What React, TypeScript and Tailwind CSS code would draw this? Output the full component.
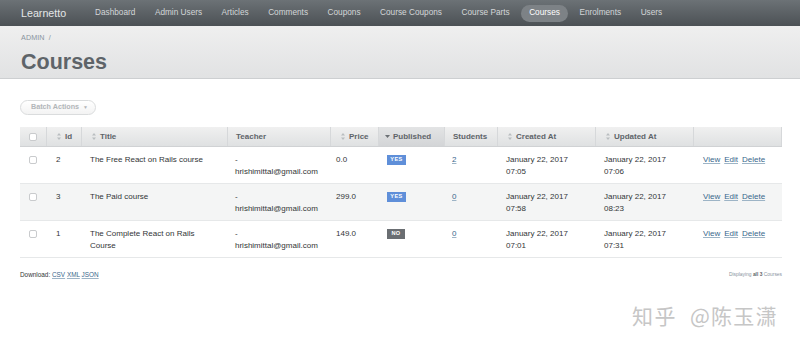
import React from "react"

const navItems = ["Dashboard", "Admin Users", "Articles", "Comments", "Coupons", "Course Coupons", "Course Parts", "Courses", "Enrolments", "Users"]

const gridCols = "grid grid-cols-[27px_35px_146px_103px_48px_66px_53px_98px_98px_88px]"

type Course = {
	id: number
	title: string[]
	price: string
	published: boolean
	students: number
	created: string
	updated: string
}

const courses: Course[] = [
	{ id: 2, title: ["The Free React on Rails course"], price: "0.0", published: true, students: 2, created: "07:05", updated: "07:06" },
	{ id: 3, title: ["The Paid course"], price: "299.0", published: true, students: 0, created: "07:58", updated: "08:23" },
	{ id: 1, title: ["The Complete React on Rails", "Course"], price: "149.0", published: false, students: 0, created: "07:01", updated: "07:31" },
]

const SortIcon = () => (
	<svg width="4" height="7" viewBox="0 0 4 7" className="shrink-0">
		<path d="M2 0 L4 2.6 H0 Z M2 7 L4 4.4 H0 Z" fill="#b9bdc0" />
	</svg>
)

const DownIcon = () => (
	<svg width="5" height="3" viewBox="0 0 5 3" className="shrink-0">
		<path d="M0 0 H5 L2.5 3 Z" fill="#6b7074" />
	</svg>
)

const Checkbox = () => <span className="block w-[8px] h-[8px] rounded-[2px] border border-[#c9cbcd] bg-white" />

const Th = ({ children, sort, pl }: { children?: React.ReactNode; sort?: "both" | "down"; pl: number }) => (
	<div
		className={`flex items-center h-full border-r border-[#d6d8da] ${sort === "down" ? "bg-linear-to-b from-[#e3e4e5] to-[#d3d5d7]" : ""}`}
		style={{ paddingLeft: pl }}
	>
		{sort === "both" && <span className="mr-[4px] flex"><SortIcon /></span>}
		{sort === "down" && <span className="mr-[3px] flex"><DownIcon /></span>}
		{children}
	</div>
)

const Link = ({ children }: { children: React.ReactNode }) => <a className="text-[#38678b] underline underline-offset-[1px] decoration-[#9db4c6]">{children}</a>

export default function App() {
	return (
		<div className="relative w-[800px] h-[348px] overflow-hidden bg-white text-[#323537]" style={{ fontFamily: '"Liberation Sans", Arial, sans-serif' }}>
			{/* header */}
			<header className="flex items-center h-[26px] pt-[1px] bg-linear-to-b from-[#6c7276] to-[#4c5155]">
				<span className="ml-[21px] w-[66px] text-[10.7px] text-[#e4e6e7] leading-none">Learnetto</span>
				<nav className="flex items-center gap-[3.5px]">
					{navItems.map(item => (
						<span
							key={item}
							className={`h-[17px] px-[8px] flex items-center rounded-full text-[8.25px] leading-none ${item === "Courses" ? "bg-[#7d8286] text-white" : "text-[#d3d6d8]"}`}
						>
							{item}
						</span>
					))}
				</nav>
			</header>

			{/* title bar */}
			<div className="h-[53px] px-[21px] pt-[7px] bg-linear-to-b from-[#efefef] to-[#e1e2e3] border-b border-[#cdcfd1]">
				<div className="text-[7.2px] leading-[10px] text-[#8a949e] tracking-[0.1px]">ADMIN &nbsp;/</div>
				<h2 className="mt-[7px] text-[21.5px] leading-[24px] font-bold text-[#5e6469]">Courses</h2>
			</div>

			{/* content */}
			<div className="px-[20px]">
				<div className="mt-[21px] flex items-center w-[76px] h-[15px] rounded-full border border-[#dadcdd] bg-linear-to-b from-white to-[#f3f3f3] pl-[10px] text-[7.2px] font-bold text-[#b2b6b9]">
					Batch Actions
					<span className="ml-[4px] text-[5px]">▼</span>
				</div>

				<div className="mt-[12px] w-[762px] text-[8px]">
					<div className={`${gridCols} h-[20px] bg-linear-to-b from-[#f0f0f0] to-[#dfe1e2] border-b border-[#d0d2d4] font-bold text-[#5e6469]`}>
						<Th pl={9}><Checkbox /></Th>
						<Th pl={10} sort="both">Id</Th>
						<Th pl={10} sort="both">Title</Th>
						<Th pl={8}>Teacher</Th>
						<Th pl={10} sort="both">Price</Th>
						<Th pl={6} sort="down">Published</Th>
						<Th pl={8}>Students</Th>
						<Th pl={10} sort="both">Created At</Th>
						<Th pl={10} sort="both">Updated At</Th>
						<Th pl={8} />
					</div>
					{courses.map((c, i) => (
						<div key={c.id} className={`${gridCols} h-[37px] pt-[7px] leading-[12px] border-b border-[#e6e8e9] ${i % 2 === 1 ? "bg-[#f4f5f5]" : "bg-white"}`}>
							<div className="pl-[9px] pt-[2px]"><Checkbox /></div>
							<div className="pl-[9px]">{c.id}</div>
							<div className="pl-[8px]">
								{c.title.map(t => <div key={t}>{t}</div>)}
							</div>
							<div className="pl-[7px]">
								<div>-</div>
								<div>hrishimittal@gmail.com</div>
							</div>
							<div className="pl-[5px]">{c.price}</div>
							<div className="pl-[8px] pt-[1px]">
								<span
									className={`flex items-center justify-center h-[10px] text-[5.6px] font-bold tracking-[0.4px] text-white leading-none ${c.published ? "w-[19px] bg-[#5f8fd9]" : "w-[18px] bg-[#6a6e72]"}`}
								>
									{c.published ? "YES" : "NO"}
								</span>
							</div>
							<div className="pl-[7px]"><Link>{c.students}</Link></div>
							<div className="pl-[8px]">
								<div>January 22, 2017</div>
								<div>{c.created}</div>
							</div>
							<div className="pl-[8px]">
								<div>January 22, 2017</div>
								<div>{c.updated}</div>
							</div>
							<div className="pl-[9px] flex gap-[4px] h-[12px]">
								<Link>View</Link>
								<Link>Edit</Link>
								<Link>Delete</Link>
							</div>
						</div>
					))}
				</div>

				<div className="mt-[12px] w-[762px] flex items-center justify-between h-[9px]">
					<div className="text-[6.4px] text-[#323537]">
						Download:{" "}
						<Link>CSV</Link> <Link>XML</Link> <Link>JSON</Link>
					</div>
					<div className="text-[4.9px] text-[#8a949e]">
						Displaying <b className="text-[#5e6469]">all 3</b> Courses
					</div>
				</div>
			</div>

			{/* watermark */}
			<div
				className="absolute left-[632px] top-[302px] flex items-center text-[21px] leading-[26px] text-[#c6c6c6]"
				style={{ fontFamily: '"Noto Sans CJK SC", sans-serif' }}
			>
				<span className="tracking-[1.5px]">知乎</span>
				<span className="ml-[13px]">@</span>
				<span className="ml-[1px] tracking-[1.5px]">陈玉潇</span>
			</div>
		</div>
	)
}
